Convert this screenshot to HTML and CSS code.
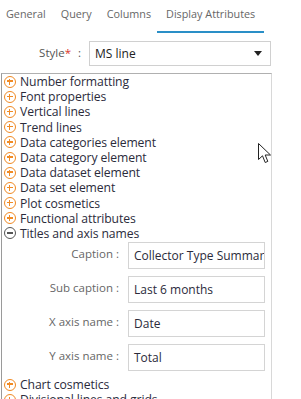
FILE: index.html
```html
<!DOCTYPE html>
<html>
<head>
<meta charset="utf-8">
<link rel="stylesheet" href="styles.css">
</head>
<body>
<div class="page">
  <div class="tabs">
    <div class="tab">General</div>
    <div class="tab">Query</div>
    <div class="tab">Columns</div>
    <div class="tab active">Display Attributes</div>
  </div>
  <div class="style-row">
    <div class="style-label">Style<span class="req">*</span><span class="colon">:</span></div>
    <div class="select"><span>MS line</span><svg class="caret" width="8" height="5" viewBox="0 0 8 5"><path d="M0 0H8L4 5Z" fill="#222"/></svg></div>
  </div>
  <div class="panel">
    <div class="sec"><span class="ico plus"></span>Number formatting</div>
    <div class="sec"><span class="ico plus"></span>Font properties</div>
    <div class="sec"><span class="ico plus"></span>Vertical lines</div>
    <div class="sec"><span class="ico plus"></span>Trend lines</div>
    <div class="sec"><span class="ico plus"></span>Data categories element</div>
    <div class="sec"><span class="ico plus"></span>Data category element</div>
    <div class="sec"><span class="ico plus"></span>Data dataset element</div>
    <div class="sec"><span class="ico plus"></span>Data set element</div>
    <div class="sec"><span class="ico plus"></span>Plot cosmetics</div>
    <div class="sec"><span class="ico plus"></span>Functional attributes</div>
    <div class="sec"><span class="ico minus"></span>Titles and axis names</div>
    <div class="fields">
      <div class="field"><label>Caption :</label><div class="input">Collector Type Summary</div></div>
      <div class="field"><label>Sub caption :</label><div class="input">Last 6 months</div></div>
      <div class="field"><label>X axis name :</label><div class="input">Date</div></div>
      <div class="field"><label>Y axis name :</label><div class="input">Total</div></div>
    </div>
    <div class="sec"><span class="ico plus"></span>Chart cosmetics</div>
    <div class="sec"><span class="ico plus"></span>Divisional lines and grids</div>
  </div>
  <svg class="cursor" width="14" height="22" viewBox="0 0 14 22"><path d="M0.5 0.5V16.5L4.5 12.8L7.2 19.5L9.8 18.4L7.2 12H12.5Z" fill="#fff" stroke="#222" stroke-width="1"/></svg>
</div>
</body>
</html>
```
FILE: styles.css
```css
html, body { margin: 0; padding: 0; background: #fff; }
body { font-family: "Open Sans", "Noto Sans", sans-serif; overflow: hidden; }
.page { position: relative; width: 301px; height: 399px; overflow: hidden; }

.tabs { display: flex; height: 33px; margin-left: -1.5px; }
.tab { padding: 6px 7.5px 0; font-size: 10.8px; color: #666; height: 25px; line-height: 16px; white-space: nowrap; }
.tab.active { border-bottom: 2px solid #2a8fc7; padding: 6px 9px 0; margin-left: -1.5px; }

.style-row { display: flex; align-items: center; margin-top: 8px; height: 25px; }
.style-label { width: 82px; text-align: right; font-size: 11.5px; color: #555; padding-right: 1px; box-sizing: border-box; margin-top: -3px; }
.style-label .req { color: #d9342b; }
.style-label .colon { margin-left: 7px; }
.select { margin-left: 7px; width: 182px; height: 25px; box-sizing: border-box; border: 1px solid #d0d0d0; display: flex; align-items: center; justify-content: space-between; padding: 0 8px 0 5px; font-size: 12px; color: #222; }
.caret { display: block; }

.panel { margin-top: 7px; margin-left: 1px; width: 271px; box-sizing: border-box; border-left: 1px solid #9a9a9a; border-top: 1px solid #b0b0b0; border-right: 1px solid #d8d8d8; height: 330px; }
.sec { display: flex; align-items: center; height: 15.2px; line-height: 15px; font-size: 12.2px; letter-spacing: -0.1px; color: #2b2b3b; white-space: nowrap; }
.ico { width: 12px; height: 12px; box-sizing: border-box; border-radius: 50%; border: 1.5px solid #f08a24; margin: 0 4px 0 2px; position: relative; flex: none; }
.ico::before { content: ""; position: absolute; left: 2px; right: 2px; top: 3.75px; height: 1.5px; background: #f08a24; }
.plus::after { content: ""; position: absolute; top: 2px; bottom: 2px; left: 3.75px; width: 1.5px; background: #f08a24; }
.minus { border-color: #555; }
.minus::before { background: #555; }

.fields { display: flex; flex-direction: column; gap: 7px; padding: 1px 0 6px; }
.field { display: flex; align-items: center; }
.field label { width: 119px; text-align: right; padding-right: 2px; box-sizing: border-box; font-size: 11.5px; color: #666; margin-top: -4px; }
.input { margin-left: 7px; width: 137px; height: 27px; box-sizing: border-box; border: 1px solid #d4d4d4; padding: 0 0 0 5px; font-size: 12px; color: #2b2b3b; line-height: 25px; white-space: nowrap; overflow: hidden; }

.cursor { position: absolute; left: 258px; top: 143px; }
```
